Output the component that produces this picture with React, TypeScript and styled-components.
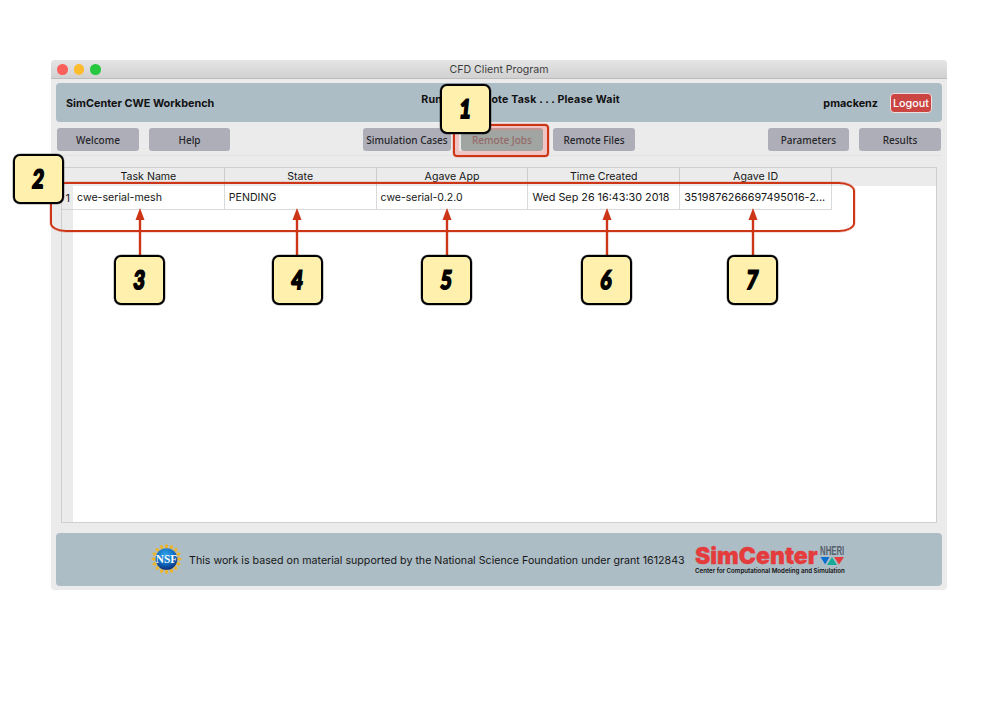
import React from "react";
import styled, { createGlobalStyle } from "styled-components";

const Global = createGlobalStyle`
  * { box-sizing: border-box; }
  html, body { margin: 0; background: #fff; }
  body { font-family: Inter, "Liberation Sans", sans-serif; font-size: 11px; color: #222; }
`;

const Page = styled.div`
  position: relative;
  width: 1004px;
  height: 707px;
  padding: 60px 57px 0 51px;
  overflow: hidden;
`;

const Window = styled.div`
  height: 530px;
  display: flex;
  flex-direction: column;
  background: #ebebeb;
  border-radius: 4px;
  overflow: hidden;
`;

const TitleBar = styled.div`
  flex: none;
  height: 18.5px;
  display: grid;
  grid-template-columns: 1fr auto 1fr;
  align-items: center;
  padding: 1px 6px 0;
  background: linear-gradient(#e5e5e5, #d1d1d1);
  border-bottom: 1px solid #bcbcbc;
`;

const Lights = styled.div`
  display: flex;
  gap: 6px;
`;

const Light = styled.i<{ $color: string }>`
  width: 10.5px;
  height: 10.5px;
  border-radius: 50%;
  background: ${(p) => p.$color};
`;

const Label = styled.span<{ $size?: number; $spacing?: number; $weight?: number; $color?: string }>`
  white-space: nowrap;
  font-size: ${(p) => p.$size ?? 11}px;
  letter-spacing: ${(p) => p.$spacing ?? 0}px;
  font-weight: ${(p) => p.$weight ?? 400};
  color: ${(p) => p.$color ?? "#161616"};
`;

const Banner = styled.header`
  flex: none;
  height: 39px;
  margin: 4.5px 5px 0;
  padding: 1px 10px 0;
  display: grid;
  grid-template-columns: 1fr auto 1fr;
  align-items: center;
  background: #adbdc6;
  border-radius: 4px;
`;

const Status = styled.div`
  padding: 0 0 8px 43px;
`;

const Account = styled.div`
  display: flex;
  justify-content: flex-end;
  align-items: center;
  gap: 12px;
`;

const Logout = styled.button`
  width: 42px;
  height: 20px;
  padding: 0;
  border: 1px solid #efdede;
  border-radius: 4px;
  background: #cb4543;
  color: #fff;
  font: 500 10.8px Inter, sans-serif;
`;

const Toolbar = styled.nav`
  flex: none;
  height: 34px;
  margin: 0 5px;
  padding: 6px 0 0 1px;
  display: flex;
  align-items: flex-start;
  border-bottom: 1px solid #e2e2e2;
`;

const NavButton = styled.button<{ $width: number; $left?: number; $dim?: boolean }>`
  flex: none;
  width: ${(p) => p.$width}px;
  height: 23px;
  margin-left: ${(p) => p.$left ?? 0}px;
  padding: 1px 0 0;
  border: 0;
  border-radius: 3px;
  background: ${(p) => (p.$dim ? "#a1a5a1" : "#aeaeb8")};
  color: ${(p) => (p.$dim ? "#946a6a" : "#26262a")};
  font: 500 10px "Noto Sans", sans-serif;
  white-space: nowrap;
`;

const Table = styled.section`
  flex: none;
  width: 876px;
  height: 355.5px;
  margin: 11px 0 0 10px;
  display: grid;
  grid-template-columns: 11px 1fr;
  background: #fff;
  border: 1px solid #cfcfcf;
`;

const Gutter = styled.div`
  background: #ebebeb;
  padding-top: 18px;
`;

const RowNumber = styled.div`
  height: 24px;
  line-height: 24px;
  text-align: right;
  padding-right: 3px;
  border-bottom: 1px solid #d4d4d4;
`;

const HeadRow = styled.div`
  height: 18px;
  display: flex;
  background: #ebebeb;
`;

const HeadCell = styled.div`
  width: 151.8px;
  padding-bottom: 2px;
  border-right: 1px solid #cbcbcb;
  display: flex;
  justify-content: center;
  align-items: center;
`;

const BodyRow = styled.div`
  width: 759px;
  height: 24px;
  display: flex;
  border-bottom: 1px solid #dadada;
`;

const BodyCell = styled.div`
  width: 151.8px;
  padding-left: 4px;
  display: flex;
  align-items: center;
  border-right: 1px solid #dadada;
`;

const Footer = styled.footer`
  flex: none;
  height: 53px;
  margin: 10px 5px 0;
  padding-left: 95px;
  display: flex;
  align-items: center;
  background: #adbdc6;
  border-radius: 4px;
`;

const Credit = styled.div`
  flex: none;
  width: 513px;
  padding: 1px 0 0 7px;
`;

const Brand = styled.div`
  display: flex;
  flex-direction: column;
  width: 152px;
  padding-top: 1px;
`;

const BrandTop = styled.div`
  display: flex;
  height: 21px;
  align-items: center;
`;

const BrandName = styled.span`
  flex: none;
  width: 125px;
  font: 900 23px/20px Inter, sans-serif;
  color: #e43b3c;
  -webkit-text-stroke: 0.3px #e43b3c;
`;

const Nheri = styled.span`
  display: block;
  font: 700 12px/11px "Liberation Sans Narrow", "Liberation Sans", sans-serif;
  color: #56616b;
  transform-origin: left;
  transform: scaleX(0.65);
`;

const NheriMark = styled.div`
  flex: none;
  width: 24px;
  height: 19px;
`;

const Tagline = styled.span`
  margin-top: 1px;
  font: 600 6.15px/7px Inter, sans-serif;
  color: #111;
  white-space: nowrap;
`;

const INK = "#cd3517";

const RowOutline = styled.div`
  position: absolute;
  left: 50px;
  top: 182px;
  width: 804.5px;
  height: 49.5px;
  border: 2px solid ${INK};
  border-radius: 16px / 9px;
  box-shadow: 0 0 0 0.5px rgba(205, 53, 23, 0.35);
`;

const JobsOutline = styled.div`
  position: absolute;
  left: 453px;
  top: 124px;
  width: 96px;
  height: 33px;
  border: 2px solid ${INK};
  border-radius: 4px;
  box-shadow: inset 0 0 1px 4px rgba(255, 120, 120, 0.35), 0 0 0 0.5px rgba(205, 53, 23, 0.35);
`;

const Badge = styled.div<{ $x: number; $y: number }>`
  position: absolute;
  left: ${(p) => p.$x}px;
  top: ${(p) => p.$y}px;
  width: 51px;
  height: 50px;
  border: 2px solid #000;
  border-radius: 7px;
  background: #fff0ae;
  box-shadow: 0 0 0 0.5px rgba(0, 0, 0, 0.4);
  display: flex;
  justify-content: center;
  align-items: center;
`;

const Digit = styled.span`
  font: 900 25.5px/30px Lato, sans-serif;
  color: #000;
  -webkit-text-stroke: 1.8px #000;
  transform: translateY(-1px) skewX(-6deg) scaleX(0.76);
`;

const Arrow = styled.svg<{ $x: number }>`
  position: absolute;
  left: ${(p) => p.$x - 5}px;
  top: 208px;
`;

const columns = [
  { head: "Task Name", cell: "cwe-serial-mesh", size: 10.65 },
  { head: "State", cell: "PENDING", size: 10.6 },
  { head: "Agave App", cell: "cwe-serial-0.2.0", size: 10.5 },
  { head: "Time Created", cell: "Wed Sep 26 16:43:30 2018", size: 10.8 },
  { head: "Agave ID", cell: "3519876266697495016-2...", size: 10.8 },
];

const callouts = [
  { n: 3, x: 114 },
  { n: 4, x: 271.5 },
  { n: 5, x: 421.3 },
  { n: 6, x: 581 },
  { n: 7, x: 727 },
];

function NsfLogo() {
  const rays = Array.from({ length: 16 }, (_, i) => i * 22.5);
  return (
    <svg width="31" height="32" viewBox="-16 -16 32 32">
      <defs>
        <radialGradient id="globe" cx="0.45" cy="0.3" r="0.7">
          <stop offset="0" stopColor="#2ea2e8" />
          <stop offset="0.6" stopColor="#126bc0" />
          <stop offset="1" stopColor="#0b2f7c" />
        </radialGradient>
      </defs>
      {rays.map((a) => (
        <path key={a} d="M-2 -10L-1.2 -12L-1.9 -13.6L0 -16L1.9 -13.6L1.2 -12L2 -10Z" fill="#eab52c" transform={`rotate(${a})`} />
      ))}
      <circle r="11.6" fill="#cdb878" />
      <circle r="11.2" fill="url(#globe)" />
      <text x="-11" y="4" fontFamily="Liberation Serif, serif" fontWeight="700" fontSize="12" fill="#fff" textLength="22" lengthAdjust="spacingAndGlyphs">
        NSF
      </text>
    </svg>
  );
}

export default function App() {
  return (
    <Page>
      <Global />
      <Window>
        <TitleBar>
          <Lights>
            <Light $color="#fc605b" />
            <Light $color="#fdbc2e" />
            <Light $color="#27c840" />
          </Lights>
          <Label $size={10.6} $color="#3c3c3c">CFD Client Program</Label>
          <span />
        </TitleBar>
        <Banner>
          <Label $weight={700} $size={10.85} $color="#111">SimCenter CWE Workbench</Label>
          <Status>
            <Label $weight={700} $size={10.6} $spacing={0.18} $color="#111">Running Remote Task . . . Please Wait</Label>
          </Status>
          <Account>
            <Label $weight={700} $size={10.8} $color="#111">pmackenz</Label>
            <Logout>Logout</Logout>
          </Account>
        </Banner>
        <Toolbar>
          <NavButton $width={82}>Welcome</NavButton>
          <NavButton $width={81} $left={10}>Help</NavButton>
          <NavButton $width={88} $left={133}>Simulation Cases</NavButton>
          <NavButton $width={82} $left={10} $dim>Remote Jobs</NavButton>
          <NavButton $width={82} $left={10}>Remote Files</NavButton>
          <NavButton $width={81} $left={133}>Parameters</NavButton>
          <NavButton $width={82} $left={10}>Results</NavButton>
        </Toolbar>
        <Table>
          <Gutter>
            <RowNumber>1</RowNumber>
          </Gutter>
          <div>
            <HeadRow>
              {columns.map((c) => (
                <HeadCell key={c.head}><Label $size={10.6}>{c.head}</Label></HeadCell>
              ))}
            </HeadRow>
            <BodyRow>
              {columns.map((c) => (
                <BodyCell key={c.head}><Label $size={c.size}>{c.cell}</Label></BodyCell>
              ))}
            </BodyRow>
          </div>
        </Table>
        <Footer>
          <NsfLogo />
          <Credit>
            <Label $size={10.67}>This work is based on material supported by the National Science Foundation under grant 1612843</Label>
          </Credit>
          <Brand>
            <BrandTop>
              <BrandName>SimCenter</BrandName>
              <NheriMark>
                <Nheri>NHERI</Nheri>
                <svg width="24" height="8" viewBox="0 0 24 8" display="block">
                  <path d="M0.5 0H9.5L5.2 7.5Z" fill="#0c6fd0" />
                  <path d="M14 0H24L19 7.5Z" fill="#e43b3c" />
                  <path d="M7 8L12 0L17 8Z" fill="#15ab98" />
                </svg>
              </NheriMark>
            </BrandTop>
            <Tagline>Center for Computational Modeling and Simulation</Tagline>
          </Brand>
        </Footer>
      </Window>
      <RowOutline />
      <JobsOutline />
      {callouts.map((c) => (
        <React.Fragment key={c.n}>
          <Arrow $x={c.x + 25.5} width="10" height="48" viewBox="0 0 10 48">
            <path d="M5 0L9.5 12H0.5Z" fill={INK} />
            <path d="M5 10V48" stroke={INK} strokeWidth="2.4" />
          </Arrow>
          <Badge $x={c.x} $y={255}><Digit>{c.n}</Digit></Badge>
        </React.Fragment>
      ))}
      <Badge $x={440} $y={84}><Digit>1</Digit></Badge>
      <Badge $x={13} $y={154}><Digit>2</Digit></Badge>
    </Page>
  );
}
